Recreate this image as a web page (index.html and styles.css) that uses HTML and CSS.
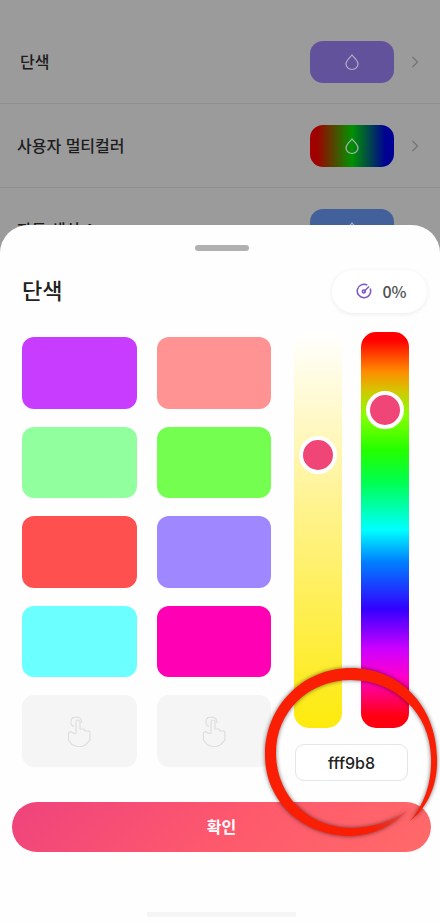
FILE: index.html
```html
<!DOCTYPE html>
<html lang="ko">
<head>
<meta charset="utf-8">
<meta name="viewport" content="width=device-width, initial-scale=1">
<title>단색</title>
<link rel="stylesheet" href="styles.css">
</head>
<body>
<svg class="defs" aria-hidden="true">
  <symbol id="drop" viewBox="0 0 16 18"><path d="M8 2C6.300 4.500 2 7.500 2 11a6 5.500 0 0 0 12 0C14 7.500 9.700 4.500 8 2Z"/></symbol>
  <symbol id="chevron" viewBox="0 0 8 14"><path d="M1.500 2 6.500 7 1.500 12"/></symbol>
  <symbol id="tap" viewBox="0 0 26 34"><path d="M10 20V8a2 2 0 0 1 4 0V15h4l1 2h4l1 1.500V26l-4 4.500-4 2h-5l-5-2-3.500-4.500v-7l2-1.500 4.500 2.500M8 12.500C3 11 4.500 3 9 3.500 15 2 15.500 6 16 9"/></symbol>
</svg>
<main class="screen">
  <ul class="modes">
    <li><a class="mode mode-current" href="#solid"><span class="mode-name">단색</span><span class="chip chip-solid"><svg class="drop"><use href="#drop"/></svg></span><svg class="chevron"><use href="#chevron"/></svg></a></li>
    <li><a class="mode" href="#multi"><span class="mode-name">사용자 멀티컬러</span><span class="chip chip-multi"><svg class="drop"><use href="#drop"/></svg></span><svg class="chevron"><use href="#chevron"/></svg></a></li>
    <li><a class="mode" href="#auto"><span class="mode-name">자동 색상 A</span><span class="chip chip-auto"><svg class="drop"><use href="#drop"/></svg></span><svg class="chevron"><use href="#chevron"/></svg></a></li>
  </ul>
  <section class="sheet" aria-labelledby="sheet-title">
    <div class="handle"></div>
    <header class="sheet-head">
      <h1 id="sheet-title">단색</h1>
      <button class="speed" type="button"><svg class="gauge" viewBox="0 0 16 16" aria-hidden="true"><path d="M14.200 5.600A6.700 6.700 0 1 1 11.300 2.200"/><path d="M8 8.500 13 3.500"/><circle cx="7.800" cy="8.500" r="1.500"/></svg>0%</button>
    </header>
    <div class="picker">
      <div class="swatches">
        <button type="button" class="swatch violet" aria-label="보라"></button>
        <button type="button" class="swatch salmon" aria-label="연분홍"></button>
        <button type="button" class="swatch mint" aria-label="연두"></button>
        <button type="button" class="swatch green" aria-label="초록"></button>
        <button type="button" class="swatch red" aria-label="빨강"></button>
        <button type="button" class="swatch lavender" aria-label="연보라"></button>
        <button type="button" class="swatch cyan" aria-label="하늘"></button>
        <button type="button" class="swatch magenta" aria-label="자홍"></button>
        <button type="button" class="swatch" aria-label="색상 저장"><svg class="tap"><use href="#tap"/></svg></button>
        <button type="button" class="swatch" aria-label="색상 저장"><svg class="tap"><use href="#tap"/></svg></button>
      </div>
      <div class="mixer">
        <div class="sliders">
          <input class="slider saturation" type="range" min="0" max="100" value="29" aria-label="채도">
          <input class="slider hue" type="range" min="0" max="360" value="59" aria-label="색조">
        </div>
        <div class="hex-field">
          <input class="hex" type="text" value="fff9b8" aria-label="색상 코드">
          <svg class="ring" viewBox="0 0 180 180" aria-hidden="true">
            <defs>
              <linearGradient id="tail" gradientUnits="userSpaceOnUse" x1="112" y1="170" x2="146" y2="148">
                <stop offset="0" stop-color="#fa1e05"/>
                <stop offset="1" stop-color="#e8403c" stop-opacity=".5"/>
              </linearGradient>
            </defs>
            <path fill="url(#tail)" d="M89 174C112 173 131 164 146 148C130 159 110 166 89 166Z"/>
            <path d="M148 159C167 144 176 121 175 95C174 44 138 6 89 6C41 6 3 44 3 93C3 140 41 174 89 174V166C47 166 14 134 14 91C14 50 46 18 89 18C134 18 168 52 169 95C170 120 163 141 148 159Z"/>
          </svg>
        </div>
      </div>
    </div>
    <button class="confirm" type="button">확인</button>
    <div class="home-bar"></div>
  </section>
</main>
</body>
</html>
```
FILE: styles.css
```css
* { box-sizing: border-box; }

body {
  margin: 0;
  font-family: "Noto Sans CJK KR", sans-serif;
  color: #222;
  background: #9b9b9b;
}

button, input { font: inherit; }

.defs { position: absolute; width: 0; height: 0; }

.screen {
  position: relative;
  min-height: 100vh;
  overflow: hidden;
}

.modes {
  margin: 0;
  padding: 20px 0 0;
  list-style: none;
}

.mode {
  display: flex;
  align-items: center;
  height: 84px;
  padding: 0 21px 0 17px;
  border-bottom: 1px solid #8f8f8f;
  color: #1c1c1c;
  font-size: 16px;
  font-weight: 500;
  text-decoration: none;
}

.mode-current { padding-left: 20px; }

.mode-name {
  flex: 1;
  padding-bottom: 2px;
}

.chip {
  display: grid;
  place-items: center;
  width: 84px;
  height: 42px;
  margin-right: 17px;
  border-radius: 13px;
}

.chip-solid { background: #62529b; }
.chip-multi { background: linear-gradient(90deg, #a00000 8%, #009200 50%, #000092 90%); }
.chip-auto { background: #42619b; }

.drop {
  width: 16px;
  height: 18px;
  fill: none;
  stroke: #b5b0c4;
  stroke-width: 1.2;
}

.chevron {
  width: 8px;
  height: 14px;
  fill: none;
  stroke: #757575;
  stroke-width: 1.3;
}

.sheet {
  position: absolute;
  inset: auto 0 0;
  padding: 20px 9px 5px 12px;
  border-radius: 28px 28px 0 0;
  background: #fefefe;
}

.handle {
  width: 54px;
  height: 6px;
  margin: 0 auto;
  border-radius: 3px;
  background: #b0b0b0;
}

.sheet-head {
  display: flex;
  align-items: center;
  justify-content: space-between;
  margin: 19px 4px 19px 10px;
}

.sheet-head h1 {
  margin: 0;
  padding-bottom: 5px;
  font-size: 22px;
  font-weight: 500;
  line-height: 32px;
}

.speed {
  display: flex;
  align-items: center;
  justify-content: center;
  gap: 10px;
  width: 95px;
  height: 43px;
  padding: 0 0 2px 4px;
  border: 0;
  border-radius: 22px;
  background: #fff;
  box-shadow: 0 1px 5px #00000014;
  color: #505050;
  font-size: 16px;
  font-weight: 500;
}

.gauge {
  width: 16px;
  height: 16px;
  fill: none;
  stroke: #7d56c4;
  stroke-width: 1.5;
}

.picker {
  display: flex;
  gap: 23px;
  margin: 0 22px 0 10px;
}

.swatches {
  flex: 1;
  display: grid;
  grid-template-columns: 1fr 1fr;
  grid-auto-rows: 1fr;
  gap: 18px 20px;
  padding: 5px 0 14px;
}

.swatch {
  display: grid;
  place-items: center;
  padding: 0;
  border: 0;
  border-radius: 12px;
  background: #f5f5f5;
}

.violet { background: #c83cff; }
.salmon { background: #ff9292; }
.mint { background: #92ff9e; }
.green { background: #74ff50; }
.red { background: #ff5050; }
.lavender { background: #9f88ff; }
.cyan { background: #6cffff; }
.magenta { background: #ff00b4; }

.tap {
  width: 26px;
  height: 34px;
  fill: none;
  stroke: #dedede;
  stroke-width: 1.2;
}

.mixer {
  display: flex;
  flex-direction: column;
  gap: 16px;
}

.sliders {
  display: flex;
  gap: 19px;
}

.slider {
  width: 48px;
  height: 396px;
  margin: 0;
  border-radius: 15px;
  writing-mode: vertical-lr;
  appearance: none;
}

.slider::-webkit-slider-thumb {
  width: 38px;
  height: 38px;
  border: 4px solid #fff;
  border-radius: 50%;
  background: #ef4577;
  appearance: none;
}

.saturation { background: linear-gradient(#fff, #fff394 42%, #fdea0c); }

.hue {
  background: linear-gradient(#f00 2%, #ff8c00 10%, #d2c800 15%, #8f0 21%, #2f0 30%, #00ff50 38%, #0ff 50%, #0080ff 58%, #30f 70%, #c0f 80%, #f0c 87%, #f01 97%);
}

.hex-field { position: relative; }

.hex {
  display: block;
  width: 113px;
  height: 37px;
  margin: 0 auto;
  padding: 0;
  border: 1px solid #e2e6e6;
  border-radius: 9px;
  background: #fff;
  color: #222;
  font-family: Inter, sans-serif;
  font-size: 16px;
  font-weight: 500;
  text-align: center;
}

.ring {
  position: absolute;
  z-index: 1;
  left: 50%;
  bottom: -61px;
  width: 180px;
  height: 180px;
  margin-left: -90px;
  fill: #fa1e05;
  filter: drop-shadow(0 0 2px #00000090);
  pointer-events: none;
}

.confirm {
  display: block;
  width: 100%;
  height: 50px;
  margin-top: 21px;
  padding: 0 0 2px;
  border: 0;
  border-radius: 25px;
  background: linear-gradient(135deg, #ee437d, #fe5a6c 55%, #ff6a69);
  color: #fff;
  font-size: 16px;
  font-weight: 700;
}

.home-bar {
  width: 149px;
  height: 5px;
  margin: 60px auto 0;
  background: #f5f5f5;
}
```
